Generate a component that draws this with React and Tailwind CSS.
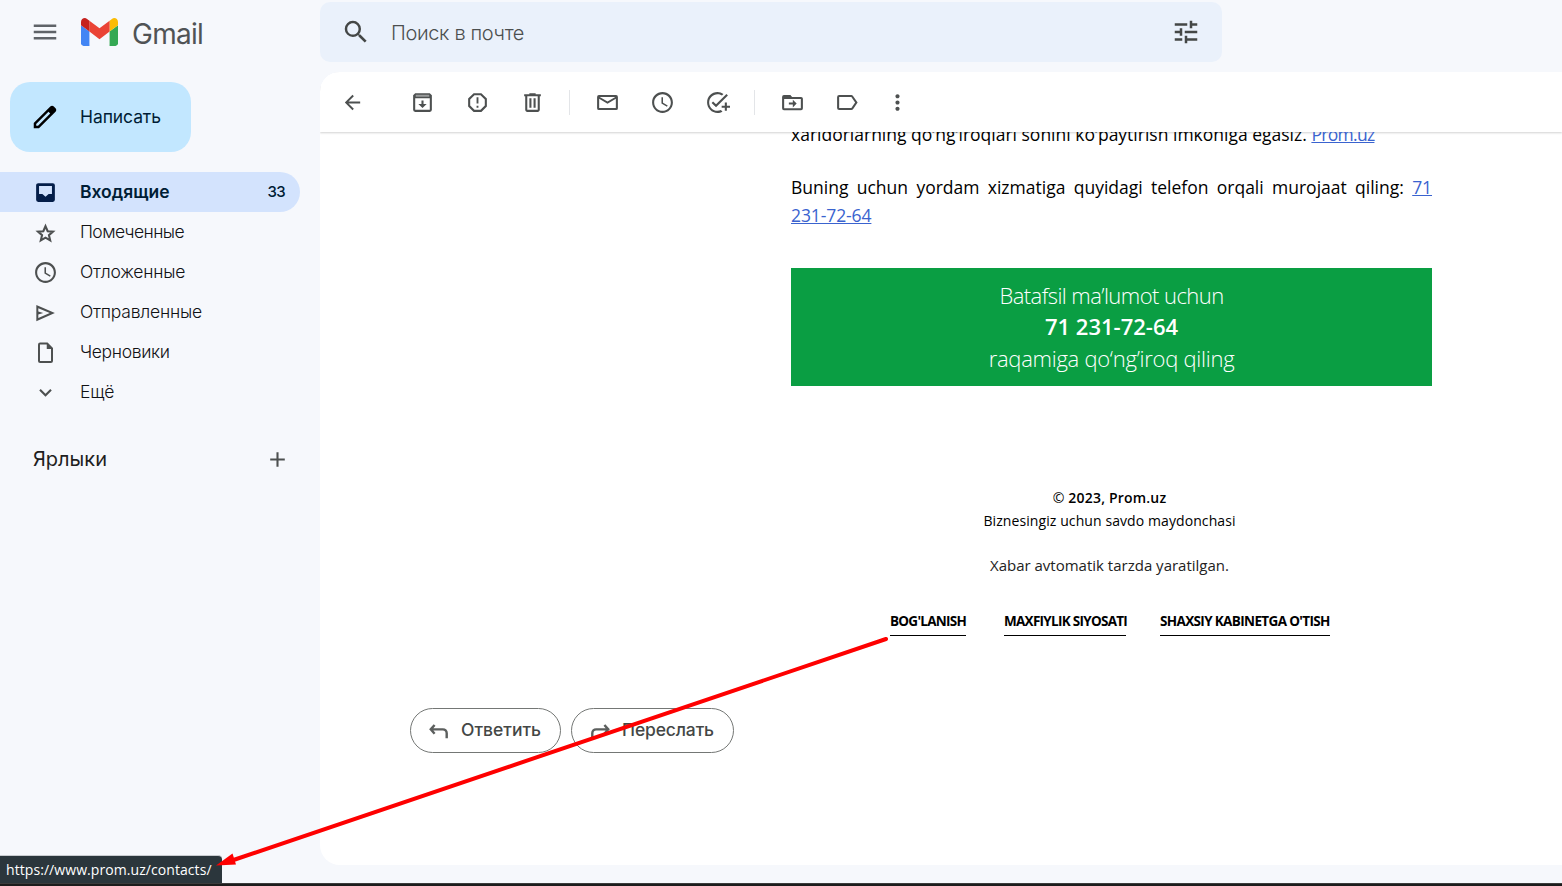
import { useState } from "react";
import {
  MdMenu,
  MdSearch,
  MdTune,
  MdArrowBack,
  MdSchedule,
  MdOutlineAddTask,
  MdMoreVert,
  MdKeyboardArrowDown,
  MdAdd,
} from "react-icons/md";

const Svg = ({ children, className = "size-[25px]" }) => (
  <svg viewBox="0 0 24 24" fill="currentColor" className={className}>
    {children}
  </svg>
);

const InboxIcon = () => (
  <Svg>
    <path
      fillRule="evenodd"
      d="M5 3h14a2 2 0 0 1 2 2v14a2 2 0 0 1-2 2H5a2 2 0 0 1-2-2V5c0-1.100.9-2 2-2zM5.800 5.800v7.700H9L12 16l3-2.500h3.200V5.800z"
    />
  </Svg>
);

const StarIcon = () => (
  <svg
    viewBox="0 0 24 24"
    fill="none"
    stroke="currentColor"
    strokeWidth="2"
    className="mt-0.5 size-[25px]"
  >
    <path d="M12 5L14.100 9.800L19.200 10.200L15.300 13.600L16.500 18.600L12 16L7.500 18.600L8.700 13.600L4.800 10.200L9.900 9.800Z" />
  </svg>
);

const SendIcon = () => (
  <Svg>
    <path d="M3.200 20.300V4.900l17.800 7.600-17.800 7.800zm1.900-3l11-4.800-11-4.700v3.200l4.700 1.500-4.700 1.500v3.300z" />
  </Svg>
);

const DraftIcon = () => (
  <Svg>
    <path d="M14 2.500H6.800a2 2 0 0 0-2 2v15.600a2 2 0 0 0 2 2h10.400a2 2 0 0 0 2-2V7.700L14 2.500zM6.700 20.200V4.400h6.500v4.200h4.100v11.600H6.700z" />
  </Svg>
);

const ArchiveIcon = () => (
  <Svg>
    <path d="M5 3h14l2 2v14a2 2 0 0 1-2 2H5a2 2 0 0 1-2-2V5l2-2zm0 5v11h14V8H5z" />
    <path d="M5.500 4.600h13v1.800h-13z" fill="#9a9c9c" />
    <path d="M11 10h2v3.500h3L12 17.300 8 13.500h3z" />
  </Svg>
);

const SpamIcon = () => (
  <Svg>
    <path d="M15.730 3H8.270L3 8.270v7.460L8.270 21h7.460L21 15.730V8.270L15.730 3zM19 14.900L14.900 19H9.100L5 14.900V9.100L9.100 5h5.800L19 9.100v5.800z" />
    <path d="M11.100 7h1.800v6h-1.800zM11.100 15h1.800v2h-1.800z" />
  </Svg>
);

const TrashIcon = () => (
  <Svg>
    <path d="M15 4V3H9v1H4v2h1v13c0 1.100.9 2 2 2h10c1.100 0 2-.9 2-2V6h1V4h-5zm2 15H7V6h10v13z" />
    <path d="M9 8h2v9H9zM13 8h2v9h-2z" />
  </Svg>
);

const MailIcon = () => (
  <Svg>
    <path d="M20.200 4.900H3.800A1.800 1.800 0 0 0 2 6.700v10.800a1.800 1.800 0 0 0 1.800 1.800h16.400a1.800 1.800 0 0 0 1.800-1.800V6.700a1.800 1.800 0 0 0-1.800-1.800zM4 17.300V8.400l8 4.700 8-4.700v8.900H4zm8-6.300L4.500 6.600h15L12 11z" />
  </Svg>
);

const MoveIcon = () => (
  <Svg>
    <path d="M20.200 6.600h-8.600L10 4.800H3.800A1.800 1.800 0 0 0 2 6.600v11a1.800 1.800 0 0 0 1.800 1.800h16.400a1.800 1.800 0 0 0 1.800-1.800V8.400a1.800 1.800 0 0 0-1.800-1.800zM20 17.400H4V8.600h16v8.800z" />
    <path d="M12.300 16.700l3.700-3.700-3.700-3.700v2.800H8.500v1.800h3.800z" />
  </Svg>
);

const LabelIcon = () => (
  <Svg>
    <path d="M17.300 5.700c-.4-.5-1-.8-1.600-.8H4a2 2 0 0 0-2 2v10.300a2 2 0 0 0 2 2h11.700c.6 0 1.200-.3 1.600-.8l4.400-6.400-4.400-6.300zM15.700 17.300H4V6.800h11.700l3.600 5.200-3.600 5.300z" />
  </Svg>
);

const ReplyIcon = ({ className }) => (
  <svg
    viewBox="0 0 20 20"
    fill="none"
    stroke="currentColor"
    strokeWidth="2.2"
    className={className}
  >
    <path d="M6 4.500L2.500 8.500 6 12.500M2.500 8.500h11a3.500 3.500 0 0 1 3.500 3.500V16.500" />
  </svg>
);

const GmailLogo = () => (
  <svg viewBox="52 42 88 66" className="h-7 w-[37px]">
    <path fill="#4285f4" d="M58 108h14V74L52 59v43c0 3.320 2.690 6 6 6" />
    <path fill="#34a853" d="M120 108h14c3.320 0 6-2.690 6-6V59l-20 15" />
    <path fill="#fbbc04" d="M120 48v26l20-15v-8c0-7.420-8.470-11.650-14.400-7.200" />
    <path fill="#ea4335" d="M72 74V48l24 18 24-18v26L96 92" />
    <path fill="#c5221f" d="M52 51v8l20 15V48l-5.600-4.200c-5.940-4.450-14.400-.22-14.400 7.200" />
  </svg>
);

const folders = [
  { name: "Входящие", icon: <InboxIcon />, count: 33 },
  { name: "Помеченные", icon: <StarIcon />, spacing: "tracking-[-0.6px]" },
  { name: "Отложенные", icon: <MdSchedule className="size-[25px]" /> },
  { name: "Отправленные", icon: <SendIcon /> },
  { name: "Черновики", icon: <DraftIcon />, spacing: "tracking-[-0.35px]" },
  { name: "Ещё", icon: <MdKeyboardArrowDown className="size-[25px]" /> },
];

function Header() {
  return (
    <header className="flex h-[72px] shrink-0 items-start">
      <div className="flex h-16 w-[320px] items-center pl-[30px]">
        <MdMenu className="size-[30px] text-[#5f6368]" />
        <div className="ml-[21px] flex items-center">
          <GmailLogo />
          <span className="mt-[3px] ml-3.5 text-[28px] leading-none tracking-[-0.7px] text-[#505355]">
            Gmail
          </span>
        </div>
      </div>
      <div className="mt-0.5 flex h-[60px] w-[902px] items-center rounded-[10px] bg-[#eaf1fb] pr-[21px] pl-[21px] text-[#444746]">
        <MdSearch className="size-[30px]" />
        <span className="mt-0.5 ml-5 flex-1 text-[20px] font-light tracking-[-0.35px] text-[#4c4f4f]">
          Поиск в почте
        </span>
        <MdTune className="size-[30px]" />
      </div>
    </header>
  );
}

function Sidebar() {
  const [active, setActive] = useState("Входящие");

  return (
    <aside className="w-[320px] shrink-0 pt-2.5">
      <button className="ml-2.5 flex h-[70px] w-[181px] items-center rounded-[20px] bg-[#c2e7ff] pl-5 text-[17.5px] text-[#001d35]">
        <Svg className="size-[30px] text-black">
          <path d="M20.410 4.940l-1.350-1.350c-.78-.78-2.050-.78-2.830 0L3 16.820V21h4.180L20.410 7.770c.79-.78.79-2.050 0-2.830zm-14 14.120L5 19l-.06-1.360 9.820-9.820 1.410 1.410-9.760 9.830z" />
        </Svg>
        <span className="ml-5 tracking-[-0.1px]">Написать</span>
      </button>

      <nav className="mt-5 w-[300px]">
        {folders.map((f) => (
          <button
            key={f.name}
            onClick={() => setActive(f.name)}
            className={`flex h-10 w-full items-center rounded-r-full pr-[15px] pl-[33px] text-[17.5px] ${
              f.name === active
                ? "bg-[#d3e3fd] font-semibold text-[#001d35]"
                : "font-light text-[#111215]"
            }`}
          >
            <span
              className={`flex size-[25px] items-center justify-center ${
                f.name === active ? "text-[#041e49]" : "text-[#4d5050]"
              }`}
            >
              {f.icon}
            </span>
            <span
              className={`ml-[22px] flex-1 text-left ${
                f.name === active ? "" : f.spacing || "tracking-[-0.2px]"
              }`}
            >
              {f.name}
            </span>
            {f.count && (
              <span className="text-[15px] font-medium tracking-[-0.6px]">{f.count}</span>
            )}
          </button>
        ))}
      </nav>

      <div className="mt-[27px] flex h-10 w-[300px] items-center justify-between pr-2.5 pl-[33px] text-[20px] text-[#1f1f1f]">
        <span>Ярлыки</span>
        <MdAdd className="size-[25px] text-[#4d5050]" />
      </div>
    </aside>
  );
}

function Toolbar() {
  return (
    <div className="flex h-[60px] shrink-0 items-center bg-white pl-[21px] text-[#4d5050] shadow-[0_1px_2px_rgba(0,0,0,0.18)]">
      <MdArrowBack className="size-[23px]" />
      <div className="ml-[46px] flex gap-[30px]">
        <ArchiveIcon />
        <SpamIcon />
        <TrashIcon />
      </div>
      <div className="ml-6 h-[25px] w-px bg-[#e3e5e8]" />
      <div className="ml-[25px] flex gap-[30px]">
        <MailIcon />
        <MdSchedule className="size-[25px]" />
        <MdOutlineAddTask className="size-[25px]" />
      </div>
      <div className="ml-6 h-[25px] w-px bg-[#e3e5e8]" />
      <div className="ml-[25px] flex gap-[30px]">
        <MoveIcon />
        <LabelIcon />
      </div>
      <MdMoreVert className="ml-[25px] size-[25px]" />
    </div>
  );
}

function Letter() {
  return (
    <div className="ml-[471px] w-[641px] font-['Open_Sans',sans-serif] text-[17.5px] leading-[28px] text-black">
      <p className="-mt-3 whitespace-nowrap">
        xaridorlarning qo‘ng‘iroqlari sonini ko‘paytirish imkoniga egasiz.{" "}
        <a className="tracking-[-0.7px] text-[#3a63cf] underline">Prom.uz</a>
      </p>
      <p className="mt-[25px] text-justify">
        Buning uchun yordam xizmatiga quyidagi telefon orqali murojaat qiling:{" "}
        <a className="tracking-[-0.1px] text-[#3a63cf] underline">71 231-72-64</a>
      </p>

      <div className="mt-[39px] h-[118px] bg-[#0a9e43] pt-3 text-center text-[22px] leading-[31.5px] font-light text-white">
        <div className="tracking-[-0.56px]">Batafsil ma’lumot uchun</div>
        <div className="-mt-px mb-px font-semibold">71 231-72-64</div>
        <div className="tracking-[-0.27px]">raqamiga qo‘ng’iroq qiling</div>
      </div>

      <div className="mt-[100px] pr-1 text-center text-[14px] leading-[23px]">
        <div className="font-semibold tracking-[0.2px]">
          <span className="font-normal">©</span> 2023, Prom.uz
        </div>
        <div className="tracking-[0.09px]">Biznesingiz uchun savdo maydonchasi</div>
        <div className="mt-[22px] text-[15px] text-[#222]">Xabar avtomatik tarzda yaratilgan.</div>
      </div>

      <div className="mt-[33px] ml-[99px] flex text-[13.5px] leading-[22px] font-bold tracking-[-0.72px] whitespace-nowrap">
        <a className="h-[26px] w-[76px] border-b border-black">BOG'LANISH</a>
        <a className="ml-[38px] h-[26px] w-[122px] border-b border-black">MAXFIYLIK SIYOSATI</a>
        <a className="ml-[34px] h-[26px] w-[170px] border-b border-black tracking-[-0.64px]">
          SHAXSIY KABINETGA O'TISH
        </a>
      </div>
    </div>
  );
}

function Actions() {
  return (
    <div className="mt-[72px] ml-[90px] flex gap-2.5 text-[17.5px] font-medium text-[#444746]">
      <button className="flex h-[45px] w-[151px] items-center rounded-full border border-[#747775] pl-[17px]">
        <ReplyIcon className="size-[22px] text-[#5c5f5e]" />
        <span className="ml-[11px]">Ответить</span>
      </button>
      <button className="flex h-[45px] w-[163px] items-center rounded-full border border-[#747775] pl-[17px]">
        <ReplyIcon className="size-[22px] -scale-x-100 text-[#5c5f5e]" />
        <span className="ml-[11px] tracking-[-0.15px]">Переслать</span>
      </button>
    </div>
  );
}

export default function App() {
  return (
    <div className="relative flex h-[886px] w-full flex-col overflow-hidden bg-[#f6f8fc] font-[Inter,sans-serif]">
      <Header />
      <div className="flex h-[793px] shrink-0">
        <Sidebar />
        <main className="flex flex-1 flex-col overflow-hidden rounded-l-[20px] bg-white">
          <Toolbar />
          <div className="flex-1 overflow-hidden">
            <Letter />
            <Actions />
          </div>
        </main>
      </div>
      <div className="mt-auto h-[3px] border-t border-[#3c3c3c] bg-[#1c1c1c]" />

      {/* link preview of the browser */}
      <div className="absolute bottom-[3px] left-0 flex h-7 w-[222px] items-center rounded-tr border-t border-[#c9ccd0] bg-[#2b363c] pl-1.5 font-['Open_Sans',sans-serif] text-[14px] tracking-[0.07px] text-white">
        https://www.prom.uz/contacts/
      </div>

      {/* arrow from the footer link to the preview */}
      <svg viewBox="0 0 1562 886" className="pointer-events-none absolute inset-0 h-[886px] w-[1562px]">
        <path d="M886 639L232 860.500" stroke="#fe0000" strokeWidth="4" strokeLinecap="round" />
        <path d="M216 865.500L232.500 853.500L236 864.500Z" fill="#fe0000" />
      </svg>
    </div>
  );
}
